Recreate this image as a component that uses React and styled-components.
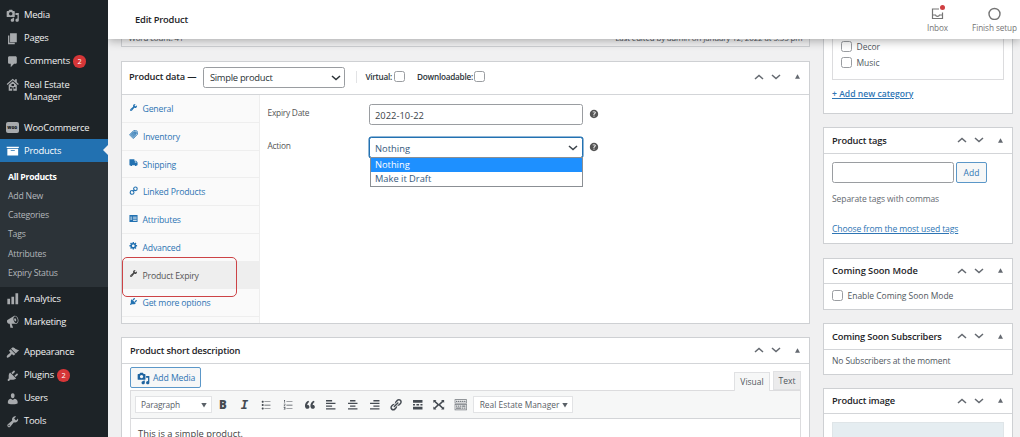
import React from 'react';
import styled, { createGlobalStyle, css } from 'styled-components';

const Global = createGlobalStyle`
  *, *::before, *::after { box-sizing: border-box; }
  body {
    margin: 0;
    overflow: hidden;
    background: #f0f0f1;
    color: #50575e;
    font-family: "Open Sans", "Noto Sans", sans-serif;
    font-size: 8.6px;
  }
`;

/* ---------- icons ---------- */

const PATHS = {
  media: 'M13 11V4c0-.55-.45-1-1-1h-1.67L9 1H5L3.67 3H2c-.55 0-1 .45-1 1v7c0 .55.45 1 1 1h10c.55 0 1-.45 1-1zM7 4.5c1.38 0 2.5 1.12 2.5 2.5S8.38 9.5 7 9.5 4.5 8.38 4.5 7 5.62 4.5 7 4.5zM14 6h5v10.5c0 1.38-1.12 2.5-2.5 2.5S14 17.88 14 16.5s1.12-2.5 2.5-2.5c.17 0 .34.02.5.05V9h-3V6zm-4 8.05V13h2v3.5c0 1.38-1.12 2.5-2.5 2.5S7 17.88 7 16.5 8.12 14 9.5 14c.17 0 .34.02.5.05z',
  page: 'M6 15V2h10v13H6zm-1 1h8v2H3V5h2v11z',
  comment: 'M5 2h9c1.1 0 2 .9 2 2v7c0 1.1-.9 2-2 2h-2l-5 5v-5H5c-1.1 0-2-.9-2-2V4c0-1.1.9-2 2-2z',
  house: 'M10 1L1 9l1.2 1.2L10 3.4l7.800 6.800L19 9l-3-2.700V2h-2.500v2.100L10 1zM10 5L4 10.300V19h12v-8.700L10 5zM8.200 9h3.600v3H8.200V9zM6 13.500h2.500V16H6v-2.500zm5.500 0H14V16h-2.500v-2.500zM9.200 14h1.600v5H9.200v-5z',
  archive: 'M19 4v2H1V4h18zM2 7h16v10H2V7zm11 3V9H7v1h6z',
  chart: 'M18 18V2h-4v16h4zm-6 0V7H8v11h4zm-6 0v-8H2v8h4z',
  megaphone: 'M18.15 5.94c.46 1.62.38 3.22-.02 4.48-.42 1.28-1.26 2.18-2.3 2.48-.16.06-.26.06-.4.06-.06.02-.12.02-.18.02-.06.02-.14.02-.22.02h-6.8l2.22 5.5c.02.14-.06.26-.14.34-.08.1-.24.16-.34.16H6.95c-.1 0-.26-.06-.34-.16-.08-.08-.16-.2-.14-.34l-1-5.5H4.25l-.02-.02c-.5.06-1.08-.18-1.54-.62s-.88-1.08-1.06-1.88c-.24-.8-.2-1.56-.02-2.2.18-.62.58-1.08 1.06-1.3l.02-.02 9-5.4c.1-.06.18-.1.24-.16.06-.04.14-.08.24-.12.16-.08.28-.12.5-.18 1.04-.3 2.24.1 3.22.98s1.84 2.24 2.26 3.86zm-2.58 5.98h-.02c.4-.1.74-.34 1.04-.7.58-.7.86-1.76.86-3.04 0-.64-.1-1.3-.28-1.98-.34-1.36-1.02-2.5-1.78-3.24s-1.68-1.1-2.46-.88c-.82.22-1.4.96-1.7 2-.32 1.04-.28 2.36.06 3.72.38 1.36 1 2.5 1.8 3.24.78.74 1.62 1.1 2.48.88zm-2.54-7.08c.22-.04.42-.02.62.04.38.16.76.48 1.02 1s.42 1.2.42 1.78c0 .3-.04.56-.12.8-.18.48-.44.84-.86.94-.34.1-.8-.06-1.14-.4s-.64-.86-.78-1.5c-.18-.62-.12-1.24.02-1.72s.48-.84.82-.94z',
  brush: 'M14.48 11.06L7.41 3.99l1.5-1.5c.5-.56 2.3-.47 3.51.32 1.21.8 1.43 1.28 2.91 2.1 1.18.64 2.45 1.26 4.45.85zm-.71.71L6.7 4.7 4.93 6.47c-.39.39-.39 1.02 0 1.41l1.06 1.06c.39.39.39 1.03 0 1.42-.6.6-1.43 1.11-2.21 1.69-.35.26-.7.53-1.01.84C1.43 14.23.4 16.08 1.4 17.07c.99 1 2.84-.03 4.18-1.36.31-.31.58-.66.85-1.02.57-.78 1.08-1.61 1.69-2.21.39-.39 1.02-.39 1.41 0l1.06 1.06c.39.39 1.02.39 1.41 0z',
  plug: 'M13.11 4.36L9.87 7.6 8 5.73l3.24-3.24c.35-.34 1.05-.2 1.56.32.52.51.66 1.21.31 1.55zm-8 1.77l.91-1.12 9.01 9.01-1.19.84c-.71.71-2.63 1.16-3.82 1.16H6.14L4.9 17.26c-.59.59-1.54.59-2.12 0-.59-.58-.59-1.53 0-2.12l1.24-1.24v-3.88c0-1.13.4-3.19 1.09-3.89zm7.26 3.97l3.24-3.24c.34-.35 1.04-.21 1.55.31.52.51.66 1.21.31 1.55l-3.24 3.25z',
  user: 'M10 9.25c-2.27 0-2.73-3.44-2.73-3.44C7 4.02 7.82 2 9.97 2c2.16 0 2.98 2.02 2.71 3.81 0 0-.41 3.44-2.68 3.44zm0 2.57L12.72 10c2.39 0 4.52 2.33 4.52 4.53v2.49s-3.65 1.13-7.24 1.13c-3.65 0-7.24-1.13-7.24-1.13v-2.49c0-2.25 1.94-4.48 4.47-4.48z',
  wrench: 'M16.68 9.77c-1.34 1.34-3.3 1.67-4.95.99l-5.41 6.52c-.99.99-2.59.99-3.58 0s-.99-2.59 0-3.57l6.52-5.42c-.68-1.65-.35-3.61.99-4.95 1.28-1.28 3.12-1.62 4.72-1.06l-2.89 2.89 2.82 2.82 2.86-2.87c.53 1.58.18 3.39-1.08 4.65zM3.81 16.21c.4.39 1.04.39 1.43 0 .4-.4.4-1.04 0-1.43-.39-.4-1.03-.4-1.43 0-.39.39-.39 1.03 0 1.43z',
  link: 'M17.74 2.76c1.68 1.69 1.68 4.41 0 6.1l-1.53 1.52c-1.12 1.12-2.7 1.47-4.14 1.09l2.62-2.61.76-.77.76-.76c.84-.84.84-2.2 0-3.04-.84-.85-2.2-.85-3.04 0l-.77.76-3.38 3.38c-.37-1.44-.02-3.02 1.1-4.14l1.52-1.53c1.69-1.68 4.42-1.68 6.1 0zM8.59 13.43l5.34-5.34c.42-.42.42-1.1 0-1.52-.44-.43-1.13-.39-1.53 0l-5.33 5.34c-.42.42-.42 1.1 0 1.52.44.43 1.13.39 1.52 0zm-.76 2.29l4.14-4.15c.38 1.44.03 3.02-1.09 4.14l-1.52 1.53c-1.69 1.68-4.41 1.68-6.1 0-1.68-1.68-1.68-4.42 0-6.1l1.53-1.52c1.12-1.12 2.7-1.47 4.14-1.1l-4.14 4.15c-.85.84-.85 2.2 0 3.05.84.84 2.2.84 3.04 0z',
  gear: 'M18 12h-2.18c-.17.7-.44 1.35-.81 1.93l1.54 1.54-2.1 2.1-1.54-1.54c-.58.36-1.23.63-1.91.79V19H8v-2.18c-.68-.16-1.33-.43-1.91-.79l-1.54 1.54-2.12-2.12 1.54-1.54c-.36-.58-.63-1.23-.79-1.91H1V9.03h2.17c.16-.7.44-1.35.8-1.94L2.43 5.55l2.1-2.1 1.54 1.54c.58-.37 1.24-.64 1.93-.81V2h3v2.18c.68.16 1.33.43 1.91.79l1.54-1.54 2.12 2.12-1.54 1.54c.36.59.64 1.24.8 1.94H18V12zm-8.5 1.5c1.66 0 3-1.34 3-3s-1.34-3-3-3-3 1.34-3 3 1.34 3 3 3z',
  truck: 'M1 3h11v3h4l3 4v6h-2a2 2 0 0 1-4 0H7a2 2 0 0 1-4 0H1V3zm12 4.500V10h4.200l-1.900-2.500H13z',
  list: 'M1 2h18v16H1V2zm2 4v2h4V6H3zm6 0v2h8V6H9zm-6 4v2h4v-2H3zm6 0v1.500h8V10H9zm0 3.500V15h8v-1.500H9z',
  ul: 'M5.500 7C4.670 7 4 6.330 4 5.500S4.670 4 5.500 4 7 4.670 7 5.500 6.330 7 5.500 7zM8 5h9v1H8V5zM5.500 12c-.83 0-1.500-.67-1.500-1.500S4.670 9 5.500 9 7 9.670 7 10.500 6.330 12 5.500 12zM8 10h9v1H8v-1zm-2.500 7c-.83 0-1.500-.67-1.500-1.500S4.670 14 5.500 14s1.500.67 1.500 1.500S6.330 17 5.500 17zM8 15h9v1H8v-1z',
  ol: 'M4.500 3H6v4H5V4h-.500V3zM8 5h9v1H8V5zM4 8.500h2.500V10L5 11.500h1.500v.8H4v-.8L5.500 10v-.7H4v-.8zM8 10h9v1H8v-1zM4 13.500h2.500V17H4v-.8h1.500v-.6H4.500v-.7h1v-.6H4v-.8zM8 15h9v1H8v-1z',
  quote: 'M9.49 13.22c0-.74-.2-1.38-.61-1.9-.62-.78-1.83-.88-2.53-.72-.29-1.65 1.11-3.75 2.920-4.650L7.880 4c-2.730 1.300-5.420 4.280-4.960 8.050C3.210 14.430 4.590 16 6.540 16c.85 0 1.560-.25 2.120-.75s.83-1.180.83-2.030zm8.050 0c0-.74-.2-1.380-.61-1.900-.63-.78-1.830-.88-2.530-.72-.29-1.650 1.110-3.750 2.920-4.650L15.930 4c-2.730 1.300-5.410 4.280-4.950 8.050.29 2.380 1.660 3.950 3.610 3.950.85 0 1.560-.25 2.120-.75s.83-1.180.83-2.030z',
  left: 'M12 5V3H3v2h9zm5 4V7H3v2h14zm-5 4v-2H3v2h9zm5 4v-2H3v2h14z',
  center: 'M14 5V3H6v2h8zm3 4V7H3v2h14zm-3 4v-2H6v2h8zm3 4v-2H3v2h14z',
  right: 'M17 5V3H8v2h9zm0 4V7H3v2h14zm0 4v-2H8v2h9zm0 4v-2H3v2h14z',
  more: 'M17 7V3H3v4h14zM6 11V9H3v2h3zm6 0V9H8v2h4zm5 0V9h-3v2h3zm0 6v-4H3v4h14z',
  expand: 'M2 3h4.500L5.200 4.300 10 8.800l4.800-4.500L13.500 3H18v4.500l-1.400-1.500L12.200 10l4.400 4 1.400-1.500V17h-4.500l1.300-1.300L10 11.200l-4.800 4.500L6.500 17H2v-4.500L3.400 14l4.400-4-4.400-4L2 7.500V3z',
  kitchen: 'M19 2v6H1V2h18zm-1 5V3H2v4h16zM5 4v2H3V4h2zm3 0v2H6V4h2zm3 0v2H9V4h2zm3 0v2h-2V4h2zm3 0v2h-2V4h2zm2 5v9H1V9h18zm-1 8v-7H2v7h16zM5 11v2H3v-2h2zm3 0v2H6v-2h2zm3 0v2H9v-2h2zm6 0v2h-5v-2h5zm-6 3v2H3v-2h8zm3 0v2h-2v-2h2zm3 0v2h-2v-2h2z',
  help: 'M17 10c0-3.870-3.140-7-7-7-3.870 0-7 3.130-7 7s3.130 7 7 7c3.860 0 7-3.130 7-7zm-6.300 1.480H9.140v-.43c0-.38.08-.7.24-.98s.46-.57.88-.89c.41-.29.68-.53.81-.71.14-.18.2-.39.2-.62 0-.25-.09-.44-.28-.58-.19-.13-.45-.19-.79-.19-.58 0-1.250.19-2 .57l-.64-1.280c.87-.49 1.800-.74 2.770-.74.81 0 1.450.2 1.920.58.48.39.71.91.71 1.550 0 .43-.09.8-.29 1.110-.19.32-.57.67-1.110 1.060-.38.28-.61.49-.71.63-.1.15-.15.34-.15.570v.35zm-1.470 2.740c-.18-.17-.27-.42-.27-.73 0-.33.08-.58.26-.75s.43-.25.770-.25c.32 0 .57.090.75.260s.27.420.27.740c0 .3-.09.55-.27.720-.18.180-.43.270-.75.270-.33 0-.58-.090-.76-.260z',
};

const Svg = styled.svg`
  width: ${p => p.$size}px;
  height: ${p => p.$size}px;
  flex: none;
  display: block;
  fill: currentColor;
`;
const Icon = ({ name, size = 13.5 }) => (
  <Svg $size={size} viewBox="0 0 20 20" fillRule="evenodd"><path d={PATHS[name]} /></Svg>
);
const TagIcon = () => (
  <Svg $size={9.5} viewBox="0 0 20 20">
    <path d="M2 10L11 1l7 6-8 11z" opacity=".55" />
    <path d="M1 10L10 1l7 1 1 7-9 9zM13.500 4.500a1.500 1.500 0 1 0 .1 0zM4 10l6-6M6 12l6-6M8 14l6-6" fill="none" stroke="currentColor" strokeWidth="1.600" />
  </Svg>
);
const ChainIcon = () => (
  <Svg $size={9.5} viewBox="0 0 20 20">
    <g fill="none" stroke="currentColor" strokeWidth="2.300">
      <circle cx="13.500" cy="6" r="3.800" /><circle cx="6.500" cy="13.500" r="4" /><path d="M8 12l4-4" />
    </g>
  </Svg>
);
const Stroke = styled.svg`
  width: ${p => p.$w}px;
  height: ${p => p.$h}px;
  flex: none;
  display: block;
  fill: none;
  stroke: currentColor;
  stroke-width: ${p => p.$line || 1.5};
`;
const Up = () => <Stroke $w={10} $h={6} viewBox="0 0 10 6"><path d="M1 5l4-3.600L9 5" /></Stroke>;
const Down = () => <Stroke $w={10} $h={6} viewBox="0 0 10 6"><path d="M1 1l4 3.600L9 1" /></Stroke>;
const Tri = () => <Svg $size={5} viewBox="0 0 5 5"><path d="M2.500.3L5 4.700H0z" /></Svg>;

/* ---------- shell ---------- */

const Shell = styled.div`
  display: flex;
  width: 1020px;
  height: 437px;
  overflow: hidden;
`;

const Sidebar = styled.nav`
  width: 108px;
  flex: none;
  background: #1d2327;
  padding-top: 3.5px;
`;
const MenuItem = styled.a`
  position: relative;
  display: flex;
  align-items: ${p => (p.$tall ? 'flex-start' : 'center')};
  gap: 5px;
  height: ${p => (p.$tall ? 35.5 : 23)}px;
  padding: ${p => (p.$tall ? '5px' : '0.5px')} 0 0 5.500px;
  margin-top: ${p => p.$gap || 0}px;
  color: ${p => (p.$active ? '#fff' : '#f0f0f1')};
  background: ${p => (p.$active ? '#2271b1' : 'transparent')};
  line-height: 12.5px;
  font-size: 9.4px;
  svg { color: ${p => (p.$active ? '#fff' : '#a7aaad')}; }
`;
const MenuLabel = styled.span`
  padding-top: ${p => (p.$low ? 1 : 0)}px;
  letter-spacing: -0.22px;
  white-space: pre-line;
`;
const Notch = styled.span`
  position: absolute;
  right: 0;
  top: 6px;
  border: 5.5px solid transparent;
  border-right-color: #f0f0f1;
  border-left-width: 0;
`;
const Count = styled.span`
  width: 12.5px;
  height: 12.5px;
  margin-left: -1.5px;
  border-radius: 50%;
  background: #d63638;
  color: #fff;
  font-size: 7.4px;
  line-height: 12.5px;
  text-align: center;
`;
const WooBadge = styled.span`
  width: 13.5px;
  height: 11px;
  border-radius: 2px;
  background: #a7aaad;
  color: #1d2327;
  font-size: 4.6px;
  font-weight: 800;
  line-height: 10px;
  text-align: center;
`;
const SubMenu = styled.div`
  background: #2c3338;
  height: 125px;
  padding: 6px 0 0 8px;
`;
const SubItem = styled.a`
  display: block;
  height: 19.15px;
  line-height: 19px;
  font-size: 8.7px;
  color: ${p => (p.$active ? '#fff' : '#b4b8bc')};
  font-weight: ${p => (p.$active ? 700 : 400)};
  letter-spacing: ${p => (p.$active ? -0.3 : -0.2)}px;
`;

const Main = styled.main`
  flex: 1;
  min-width: 0;
  display: flex;
  flex-direction: column;
`;
const TopBar = styled.header`
  position: relative;
  z-index: 2;
  display: flex;
  justify-content: space-between;
  flex: none;
  height: 39px;
  padding-left: 27px;
  background: #fff;
  box-shadow: 0 2px 9px rgba(0, 0, 0, 0.3);
  clip-path: inset(0 0 -20px 0);
`;
const PageTitle = styled.h1`
  margin: 0;
  font-size: 9.4px;
  font-weight: 600;
  line-height: 39px;
  color: #1d2327;
  letter-spacing: -0.22px;
`;
const Activity = styled.div`
  display: flex;
  color: #757575;
  font-size: 8.2px;
  letter-spacing: -0.08px;
`;
const ActivityItem = styled.div`
  position: relative;
  width: ${p => p.$w}px;
  display: flex;
  flex-direction: column;
  align-items: center;
  padding-top: 6.5px;
  line-height: 12px;
  white-space: nowrap;
  gap: 2.5px;
`;
const Dot = styled.i`
  position: absolute;
  top: 5px;
  left: 34px;
  width: 5px;
  height: 5px;
  border-radius: 50%;
  background: #cf3f42;
`;

const Content = styled.div`
  flex: 1;
  min-height: 0;
  display: flex;
  gap: 13px;
  padding-left: 13px;
`;
const Primary = styled.div`
  width: 689px;
  display: flex;
  flex-direction: column;
`;
const Secondary = styled.div`
  width: 190px;
  display: flex;
  flex-direction: column;
`;
const card = css`
  flex: none;
  background: #fff;
  border: 1px solid #ced0d3;
`;
const WordCount = styled.div`
  display: flex;
  justify-content: space-between;
  flex: none;
  height: 12px;
  margin-top: -4px;
  margin-bottom: 13.5px;
  padding: 0 6.5px;
  border: 1px solid #ced0d3;
  border-top: 0;
  background: #f3f3f4;
  font-size: 7.9px;
  letter-spacing: -0.1px;
  line-height: 6.5px;
`;

const Card = styled.section`
  ${card}
  height: ${p => p.$h}px;
  margin-bottom: ${p => p.$mb || 13.5}px;
`;
const CardHead = styled.header`
  display: flex;
  align-items: center;
  height: ${p => p.$h || 25.5}px;
  padding: 0 9px ${p => p.$pb || 0}px ${p => p.$pl || 8}px;
  border-bottom: 1px solid #d3d5d8;
  color: #1d2327;
`;
const CardTitle = styled.h2`
  margin: 0;
  font-size: 9.3px;
  font-weight: 600;
  letter-spacing: ${p => p.$ls || -0.17}px;
  white-space: nowrap;
`;
const HandleRow = styled.div`
  display: flex;
  align-items: center;
  gap: 7.500px;
  margin-left: auto;
  color: #646970;
  > :last-child { margin-left: 6.500px; }
`;
const Handles = () => <HandleRow><Up /><Down /><Tri /></HandleRow>;

const fieldFrame = css`
  display: flex;
  align-items: center;
  justify-content: space-between;
  background: #fff;
  border: 1px solid #9a9da1;
  border-radius: 2.5px;
`;
const TypeSelect = styled.div`
  ${fieldFrame}
  width: 142px;
  height: 21px;
  margin: 1px 11px 0 7px;
  padding: 1px 3.5px 0 5.5px;
  color: #2c3338;
  font-size: 9.4px;
  letter-spacing: -0.28px;
`;
const CheckLabel = styled.label`
  display: flex;
  align-items: center;
  gap: 1.5px;
  height: 12px;
  margin-right: 12.5px;
  color: #2c3338;
  font-size: 8.2px;
  font-weight: 600;
  letter-spacing: -0.25px;
  ${p => p.$divided && css`
    border-left: 1px solid #e2e3e5;
    padding-left: 8px;
  `}
`;
const Check = styled.i`
  flex: none;
  width: 11px;
  height: 11px;
  border: 1px solid #9a9da1;
  border-radius: 2.5px;
  background: #fff;
`;

const DataBody = styled.div`
  display: flex;
  height: 228px;
`;
const TabList = styled.div`
  position: relative;
  width: 138px;
  flex: none;
  border-right: 1px solid #eee;
  background: #fafafa;
`;
const Tab = styled.a`
  display: flex;
  align-items: center;
  gap: 5px;
  height: 27.75px;
  padding: 1.5px 0 0 6.500px;
  border-bottom: 1px solid #eee;
  background: ${p => (p.$active ? '#eee' : 'transparent')};
  color: ${p => (p.$active ? '#555' : '#2e75b4')};
  font-size: 8.7px;
  letter-spacing: -0.19px;
  svg { color: ${p => (p.$active ? '#444' : '#2271b1')}; margin-top: -4px; }
`;
const Highlight = styled.div`
  position: absolute;
  left: 0;
  top: 161.5px;
  width: 115px;
  height: 40.5px;
  border: 1px solid #cc4346;
  border-radius: 5px;
`;
const Fields = styled.div`
  flex: 1;
  padding: 8.5px 0 0 7.500px;
`;
const FieldRow = styled.div`
  display: flex;
  align-items: center;
  height: 21.5px;
  margin-bottom: 11.5px;
  gap: 6.5px;
`;
const FieldLabel = styled.span`
  width: 95px;
  align-self: flex-start;
  font-size: 8.4px;
  line-height: 17px;
  color: #555;
  letter-spacing: -0.25px;
`;
const Input = styled.div`
  ${fieldFrame}
  position: relative;
  width: 214px;
  height: 21.5px;
  padding: 2px 4px 0 5px;
  color: #3c434a;
  font-size: 9.4px;
  ${p => p.$focus && css`
    border-color: #2271b1;
    box-shadow: 0 0 0 0.5px #2271b1;
    color: #35597c;
    svg { color: #3c434a; margin-top: -1px; }
  `}
`;
const HelpTip = styled.span`
  color: #555;
  width: 12px;
  margin-left: -1.5px;
`;
const Options = styled.div`
  position: absolute;
  z-index: 1;
  left: -0.5px;
  top: 19.500px;
  width: 213px;
  border: 1px solid #8b8f94;
  background: #fff;
`;
const Option = styled.div`
  height: 13.9px;
  padding-left: 4.5px;
  line-height: 14px;
  font-size: 9.3px;
  background: ${p => (p.$on ? '#1e90ff' : '#fff')};
  color: ${p => (p.$on ? '#fff' : '#35597c')};
`;

/* ---------- editor ---------- */

const EditorWrap = styled.div`
  padding: 3.5px 8px 0;
`;
const EditorTop = styled.div`
  display: flex;
  height: 23px;
`;
const MediaButton = styled.button`
  display: flex;
  align-items: center;
  gap: 3.5px;
  width: 71px;
  height: 21px;
  padding: 1px 0 0 5.5px;
  border: 1px solid #5b97c8;
  border-radius: 2px;
  background: #f6f7f7;
  color: #2e75b4;
  font: inherit;
  font-size: 8.7px;
  letter-spacing: -0.12px;
  white-space: nowrap;
  svg { color: #1f64a0; }
`;
const ModeTab = styled.div`
  align-self: flex-end;
  height: 19.5px;
  margin-left: ${p => (p.$first ? 'auto' : '3px')};
  margin-bottom: ${p => (p.$on ? -1 : 0)}px;
  width: ${p => p.$w}px;
  border: 1px solid #e0e1e3;
  border-bottom: ${p => (p.$on ? 0 : '1px solid #e0e1e3')};
  background: ${p => (p.$on ? '#f6f7f7' : '#ebebec')};
  font-size: 8.5px;
  line-height: 18px;
  text-align: center;
  z-index: 1;
`;
const Editor = styled.div`
  border: 1px solid #dcdcde;
  border-bottom: 0;
  height: 60px;
`;
const Toolbar = styled.div`
  display: flex;
  align-items: center;
  height: 28px;
  padding-left: 3.5px;
  background: #f6f7f7;
  border-bottom: 1px solid #d3d5d8;
`;
const ToolSelect = styled.div`
  display: flex;
  align-items: center;
  justify-content: space-between;
  width: ${p => p.$w}px;
  height: 17px;
  padding: 0 4px 0 5.5px;
  border: 1px solid #e2e3e5;
  background: #fff;
  font-size: 8.4px;
  color: #5a6067;
  letter-spacing: ${p => p.$ls || 0}px;
  white-space: nowrap;
`;
const Tools = styled.div`
  display: flex;
  padding: 0 1.5px 0 0.5px;
`;
const Tool = styled.span`
  display: flex;
  justify-content: center;
  width: 21.65px;
  height: 13.5px;
  color: ${p => (p.$soft ? '#70757b' : '#454b52')};
`;
const BoldMark = styled.b`
  font: 800 11.5px/13.5px "Open Sans", sans-serif;
`;
const ItalicMark = styled.i`
  font: italic 700 12.5px/14.5px "DejaVu Sans Mono", monospace;
`;
const Body = styled.div`
  padding: 7.5px 7px 0;
  font-size: 9.35px;
  line-height: 14px;
  color: #444;
  white-space: nowrap;
`;
const Caret = () => <Svg $size={6} viewBox="0 0 6 6"><path d="M.3 1h5.400L3 5.600z" /></Svg>;

/* ---------- side cards ---------- */

const CategoryCard = styled.section`
  ${card}
  height: 79px;
  margin: -4px 0 13px;
  padding: 0 8px;
  border-top: 0;
`;
const CategoryBox = styled.div`
  height: 44.5px;
  padding: 4px 0 0 8px;
  border: 1px solid #dcdcde;
  border-top: 0;
`;
const CheckRow = styled.label`
  display: flex;
  align-items: center;
  height: 15.7px;
  gap: 4.5px;
  font-size: 8.5px;
  letter-spacing: -0.03px;
`;
const Link = styled.a`
  display: block;
  width: max-content;
  color: #2e75b4;
  text-decoration: underline;
  font-size: 8.6px;
  font-weight: ${p => (p.$strong ? 600 : 400)};
  letter-spacing: ${p => p.$ls || 0}px;
  line-height: 12px;
  margin-top: ${p => p.$mt}px;
`;
const SideBody = styled.div`
  padding: ${p => p.$pt || 8}px 8px 0;
  font-size: 8.5px;
  letter-spacing: ${p => p.$ls || 0}px;
`;
const TagRow = styled.div`
  display: flex;
  gap: 2px;
`;
const TagInput = styled.div`
  ${fieldFrame}
  width: 122px;
  height: 21px;
`;
const AddButton = styled.button`
  width: 31px;
  height: 21px;
  padding: 0;
  border: 1px solid #5b97c8;
  border-radius: 2px;
  background: #f6f7f7;
  color: #2e75b4;
  font: inherit;
`;
const Hint = styled.p`
  margin: 10.5px 0 0;
  line-height: 12px;
  color: #646970;
  letter-spacing: -0.08px;
`;
const Thumb = styled.div`
  height: 30px;
  background: #e5edf1;
  border: 1px solid #dfe5e8;
`;

const SUB = ['All Products', 'Add New', 'Categories', 'Tags', 'Attributes', 'Expiry Status'];

const TABS = [
  ['General', <Icon name="wrench" size={9} />],
  ['Inventory', <TagIcon />],
  ['Shipping', <Icon name="truck" size={9} />],
  ['Linked Products', <ChainIcon />],
  ['Attributes', <Icon name="list" size={9} />],
  ['Advanced', <Icon name="gear" size={9} />],
  ['Product Expiry', <Icon name="wrench" size={9} />],
  ['Get more options', <Icon name="plug" size={9} />],
];

const TOOLS = ['ul', 'ol', 'quote', 'left', 'center', 'right', 'link', 'more', 'expand', 'kitchen'];

export default function App() {
  return (
    <Shell>
      <Global />
      <Sidebar>
        <MenuItem><Icon name="media" /><MenuLabel>Media</MenuLabel></MenuItem>
        <MenuItem><Icon name="page" /><MenuLabel>Pages</MenuLabel></MenuItem>
        <MenuItem><Icon name="comment" /><MenuLabel>Comments</MenuLabel><Count>2</Count></MenuItem>
        <MenuItem $tall><Icon name="house" /><MenuLabel $low>{'Real Estate\nManager'}</MenuLabel></MenuItem>
        <MenuItem $gap={8}><WooBadge>woo</WooBadge><MenuLabel>WooCommerce</MenuLabel></MenuItem>
        <MenuItem $active><Icon name="archive" /><MenuLabel>Products</MenuLabel><Notch /></MenuItem>
        <SubMenu>
          {SUB.map((t, i) => <SubItem key={t} $active={i === 0}>{t}</SubItem>)}
        </SubMenu>
        <MenuItem><Icon name="chart" /><MenuLabel>Analytics</MenuLabel></MenuItem>
        <MenuItem><Icon name="megaphone" /><MenuLabel>Marketing</MenuLabel></MenuItem>
        <MenuItem $gap={7.5}><Icon name="brush" /><MenuLabel>Appearance</MenuLabel></MenuItem>
        <MenuItem><Icon name="plug" /><MenuLabel>Plugins</MenuLabel><Count>2</Count></MenuItem>
        <MenuItem><Icon name="user" /><MenuLabel>Users</MenuLabel></MenuItem>
        <MenuItem><Icon name="wrench" /><MenuLabel>Tools</MenuLabel></MenuItem>
      </Sidebar>

      <Main>
        <TopBar>
          <PageTitle>Edit Product</PageTitle>
          <Activity>
            <ActivityItem $w={63}>
              <Stroke $w={13} $h={13} $line={1.2} viewBox="0 0 13 13">
                <path d="M8 2H1.500v9.500h10V5.500M1.500 8h3c.3 1 1 1.300 2 1.300s1.700-.3 2-1.300h3" />
              </Stroke>
              Inbox
              <Dot />
            </ActivityItem>
            <ActivityItem $w={51}>
              <Stroke $w={13} $h={13} $line={1.4} viewBox="0 0 13 13"><circle cx="6.500" cy="7" r="5.500" /></Stroke>
              Finish setup
            </ActivityItem>
          </Activity>
        </TopBar>

        <Content>
          <Primary>
            <WordCount><span>Word count: 41</span><span>Last edited by admin on January 12, 2022 at 5:55 pm</span></WordCount>
            <Card $h={263}>
              <CardHead $h={33.5} $pb={2} $pl={7}>
                <CardTitle>Product data —</CardTitle>
                <TypeSelect>Simple product<Down /></TypeSelect>
                <CheckLabel $divided>Virtual:<Check /></CheckLabel>
                <CheckLabel>Downloadable:<Check /></CheckLabel>
                <Handles />
              </CardHead>
              <DataBody>
                <TabList>
                  {TABS.map(([t, icon]) => (
                    <Tab key={t} $active={t === 'Product Expiry'}>{icon}{t}</Tab>
                  ))}
                  <Highlight />
                </TabList>
                <Fields>
                  <FieldRow>
                    <FieldLabel>Expiry Date</FieldLabel>
                    <Input>2022-10-22</Input>
                    <HelpTip><Icon name="help" size={12} /></HelpTip>
                  </FieldRow>
                  <FieldRow>
                    <FieldLabel>Action</FieldLabel>
                    <Input $focus>
                      Nothing<Down />
                      <Options>
                        <Option $on>Nothing</Option>
                        <Option>Make it Draft</Option>
                      </Options>
                    </Input>
                    <HelpTip><Icon name="help" size={12} /></HelpTip>
                  </FieldRow>
                </Fields>
              </DataBody>
            </Card>

            <Card $h={110}>
              <CardHead><CardTitle>Product short description</CardTitle><Handles /></CardHead>
              <EditorWrap>
                <EditorTop>
                  <MediaButton><Icon name="media" size={13} />Add Media</MediaButton>
                  <ModeTab $first $on $w={36}>Visual</ModeTab>
                  <ModeTab $w={28}>Text</ModeTab>
                </EditorTop>
                <Editor>
                  <Toolbar>
                    <ToolSelect $w={77} $ls={-0.2}>Paragraph<Caret /></ToolSelect>
                    <Tools>
                      <Tool><BoldMark>B</BoldMark></Tool>
                      <Tool><ItalicMark>I</ItalicMark></Tool>
                      {TOOLS.map(n => <Tool key={n} $soft={n === 'kitchen'}><Icon name={n} /></Tool>)}
                    </Tools>
                    <ToolSelect $w={100}>Real Estate Manager<Caret /></ToolSelect>
                  </Toolbar>
                  <Body>This is a simple product.</Body>
                </Editor>
              </EditorWrap>
            </Card>
          </Primary>

          <Secondary>
            <CategoryCard>
              <CategoryBox>
                <CheckRow><Check />Decor</CheckRow>
                <CheckRow><Check />Music</CheckRow>
              </CategoryBox>
              <Link $strong $mt={8}>+ Add new category</Link>
            </CategoryCard>

            <Card $h={117}>
              <CardHead><CardTitle>Product tags</CardTitle><Handles /></CardHead>
              <SideBody>
                <TagRow><TagInput /><AddButton>Add</AddButton></TagRow>
                <Hint>Separate tags with commas</Hint>
                <Link $mt={18} $ls={-0.13}>Choose from the most used tags</Link>
              </SideBody>
            </Card>

            <Card $h={52}>
              <CardHead><CardTitle $ls={-0.06}>Coming Soon Mode</CardTitle><Handles /></CardHead>
              <SideBody $pt={4}><CheckRow>
                <Check />Enable Coming Soon Mode
              </CheckRow></SideBody>
            </Card>

            <Card $h={52} $mb={12.5}>
              <CardHead><CardTitle>Coming Soon Subscribers</CardTitle><Handles /></CardHead>
              <SideBody $pt={5} $ls={-0.1}>No Subscribers at the moment</SideBody>
            </Card>

            <Card $h={60}>
              <CardHead><CardTitle>Product image</CardTitle><Handles /></CardHead>
              <SideBody><Thumb /></SideBody>
            </Card>
          </Secondary>
        </Content>
      </Main>
    </Shell>
  );
}
